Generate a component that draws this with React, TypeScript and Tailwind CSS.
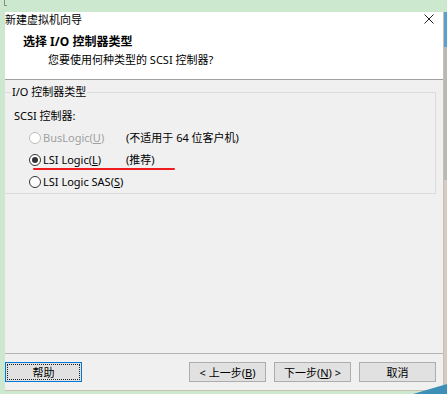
import { FC, ReactNode } from "react";

const Radio: FC<{ checked?: boolean; disabled?: boolean }> = ({ checked, disabled }) => (
  <span
    className={`flex h-[12px] w-[12px] shrink-0 items-center justify-center rounded-full border bg-white ${
      disabled ? "border-[#bcbcbc]" : "border-[#333333]"
    }`}
  >
    {checked && <span className="h-[6px] w-[6px] rounded-full bg-[#333333]" />}
  </span>
);

const Btn: FC<{ children: ReactNode; focused?: boolean }> = ({ children, focused }) => (
  <button
    className={`flex h-[20px] w-[77px] items-center justify-center bg-[#e1e1e1] text-[11px] leading-none text-black ${
      focused ? "border border-[#0078d7] p-[1px]" : "border border-[#adadad]"
    }`}
  >
    {focused ? (
      <span className="flex h-full w-full items-center justify-center border border-dotted border-[#222]">
        {children}
      </span>
    ) : (
      children
    )}
  </button>
);

export default function App() {
  return (
    <div className="relative flex h-[394px] w-[447px] overflow-hidden bg-[#cce8cf] font-['Noto_Sans','Noto_Sans_CJK_SC',sans-serif] text-black">
      {/* stray mark top-left */}
      <div className="absolute left-[4px] top-0 h-[6px] w-[3px] border-b border-l border-[#8a8a8a]" />

      <div className="w-[5px] shrink-0" />

      {/* dialog */}
      <div className="mt-[12px] flex h-[379px] w-[439px] shrink-0 flex-col overflow-hidden border-b border-r border-[#cdbfae] bg-[#f0f0f0]">
        {/* header */}
        <div className="flex h-[68px] shrink-0 flex-col border-b border-[#a0a0a0] bg-white">
          <div className="flex items-start justify-between pr-[9px]">
            <span className="text-[11px] leading-[14px] font-['Noto_Sans_CJK_SC',sans-serif]">
              新建虚拟机向导
            </span>
            <svg width="10" height="10" viewBox="0 0 10 10" className="mt-[2px]">
              <path d="M0.5 0.5L9.5 9.5M9.5 0.5L0.5 9.5" stroke="#222" strokeWidth="1" />
            </svg>
          </div>
          <div className="mt-[9px] pl-[18px] text-[12px] font-bold leading-[14px]">选择 I/O 控制器类型</div>
          <div className="mt-[4px] pl-[43px] text-[11px] leading-[14px]">您要使用何种类型的 SCSI 控制器?</div>
        </div>

        {/* body */}
        <div className="flex flex-1 flex-col">
          <fieldset className="mt-[5px] h-[109px] w-[431px] border border-l-0 border-[#dcdcdc]">
            <legend className="ml-[6px] px-[1px] text-[11px] leading-[14px]">I/O 控制器类型</legend>
            <div className="mt-[10px] pl-[9px] text-[11px] leading-[14px]">SCSI 控制器:</div>
            <div className="mt-[4px] flex flex-col text-[11px]">
              <div className="flex h-[22px] items-center pl-[24px]">
                <Radio disabled />
                <span className="ml-[2px] w-[83px] text-[#a0a0a0]">
                  BusLogic(<span className="underline">U</span>)
                </span>
                <span>(不适用于 64 位客户机)</span>
              </div>
              <div className="relative flex h-[22px] items-center pl-[24px]">
                <Radio checked />
                <span className="ml-[2px] w-[83px]">
                  LSI Logic(<span className="underline">L</span>)
                </span>
                <span>(推荐)</span>
                <div className="absolute left-[28px] top-[19px] h-[2px] w-[142px] rounded-full bg-[#ee1c1c]" />
              </div>
              <div className="flex h-[22px] items-center pl-[24px]">
                <Radio />
                <span className="ml-[2px]">
                  LSI Logic SAS(<span className="underline">S</span>)
                </span>
              </div>
            </div>
          </fieldset>

          <div className="flex-1" />

          {/* footer */}
          <div className="flex items-center justify-between border-t border-[#b4b4b4] pb-[8px] pr-[7px] pt-[8px]">
            <Btn focused>帮助</Btn>
            <div className="flex gap-[8px]">
              <Btn>
                &lt; 上一步(<span className="underline">B</span>)
              </Btn>
              <Btn>
                下一步(<span className="underline">N</span>) &gt;
              </Btn>
              <Btn>取消</Btn>
            </div>
          </div>
        </div>
      </div>

      {/* window behind, right edge */}
      <div className="mt-[12px] flex h-[373px] w-[3px] shrink-0 flex-col">
        <div className="h-[35px] bg-[#5a9fd0]" />
        <div className="h-[133px] bg-[#b8b8b8]" />
        <div className="flex-1 bg-[#d4ccc4]" />
      </div>

      {/* desktop corner */}
      <svg className="absolute bottom-0 right-0" width="40" height="10" viewBox="0 0 40 10">
        <polygon points="6,10 40,0 40,10" fill="#3d8fb8" />
      </svg>
    </div>
  );
}
